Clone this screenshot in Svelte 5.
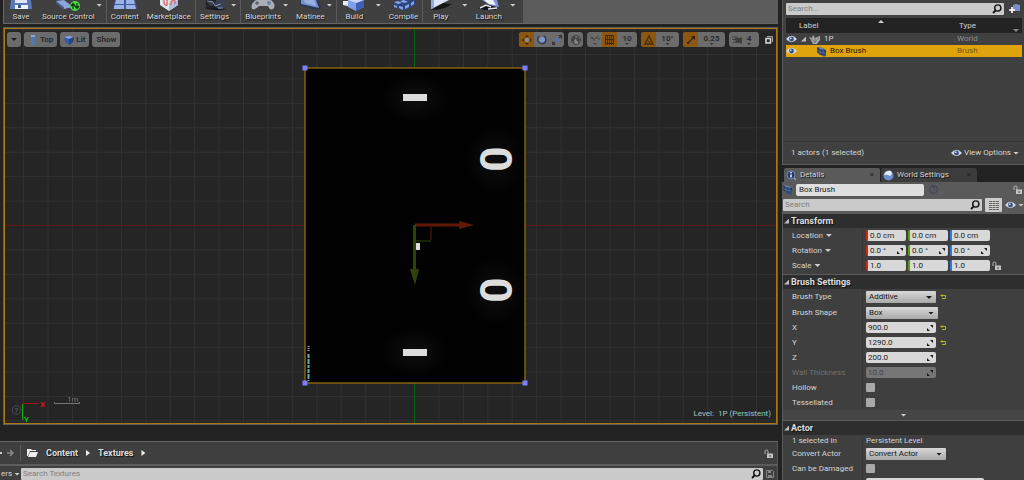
<script>
    let tools = [
        { name: "Save", icon: "save" },
        { name: "Source Control", icon: "source", menu: true, end: true },
        { name: "Content", icon: "content" },
        { name: "Marketplace", icon: "market", end: true },
        { name: "Settings", icon: "gears", menu: true, end: true },
        { name: "Blueprints", icon: "pad", menu: true },
        { name: "Matinee", icon: "matinee", menu: true, end: true },
        { name: "Build", icon: "cube", menu: true, loose: true },
        { name: "Compile", icon: "compile", end: true },
        { name: "Play", icon: "play", menu: true, loose: true },
        { name: "Launch", icon: "launch", menu: true, loose: true },
    ];

    let transform = $state([
        { name: "Location", values: ["0.0 cm", "0.0 cm", "0.0 cm"] },
        { name: "Rotation", values: ["0.0 °", "0.0 °", "0.0 °"], spin: true },
        { name: "Scale", values: ["1.0", "1.0", "1.0"], lock: true },
    ]);

    let numbers = $state([
        { id: "size-x", name: "X", value: "900.0", reset: true },
        { id: "size-y", name: "Y", value: "1290.0", reset: true },
        { id: "size-z", name: "Z", value: "200.0" },
        { id: "wall", name: "Wall Thickness", value: "10.0", disabled: true },
    ]);

    let axes = ["x", "y", "z"];
    let steps = Array.from({ length: 33 }, (_, i) => i - 16);
    let corners = [[305, 68], [525, 68], [305, 383], [525, 383]];
</script>

{#snippet toolIcon(kind)}
    <svg class="tool-icon" viewBox="0 0 26 11" aria-hidden="true">
        {#if kind === "save"}
            <path d="M3 0h20l1 9H2z" fill="#5878b8" />
            <path d="M7 0h12v3H7z" fill="#dfe6f5" />
            <path d="M7 5h13v4H7z" fill="#eef2fa" />
            <path d="M10 5h3v3h-3z" fill="#3c5690" />
        {:else if kind === "source"}
            <path d="M1 1 9 0l9 7-9 2z" fill="#8da4d8" />
            <path d="m1 1 8 6v3L1 3z" fill="#4a5f96" />
            <circle cx="20" cy="6" r="5" fill="#4fd94b" />
            <path d="M18 9V4m-2 2 2-2.400L20 6M22 3v5m-2-2 2 2.400L24 6" fill="none" stroke="#10380f" stroke-width="1.300" />
        {:else if kind === "content"}
            <path d="M3 0h20l2 9H1z" fill="#3c5a9c" />
            <path d="M4 0h8v4H3zM14 0h8l1 4h-9zM2.500 5H12v4H2zM14 5h9l1 4H14z" fill="#9bb2e6" />
        {:else if kind === "market"}
            <path d="M4 0h18v5l-9 6-9-6z" fill="#dfe4ef" />
            <path d="m13 3 9-3v5l-9 6z" fill="#aebcdd" />
            <path d="M8 0v3q1 3 3 2V0m4 5V2q2-3 4-1v3" fill="none" stroke="#d3706c" stroke-width="1.400" />
        {:else if kind === "gears"}
            <path d="M2 8q10-3 22 1-10 3-22-1z" fill="#17191d" />
            <circle cx="9" cy="3" r="4" fill="none" stroke="#20242c" stroke-width="3" />
            <circle cx="18" cy="4" r="3.500" fill="none" stroke="#384356" stroke-width="3" />
            <path d="m5 1 6 1 2 4 6-2M16 8h5" stroke="#8195bd" fill="none" />
        {:else if kind === "pad"}
            <path d="M2 9Q0 4 6 0h15q6 5 2 9-3 2-5-3h-9Q6 10 2 9z" fill="#a9adb5" />
            <path d="M7 1v4M5 3h4" stroke="#4b4e56" />
            <circle cx="19" cy="3" r="2" fill="#6d7faa" />
        {:else if kind === "matinee"}
            <path d="M3 0h19l2 8-5 2L2 5z" fill="#293752" />
            <path d="m4 0 15 0 3 8L4 4z" fill="#7390cd" />
            <path d="m7 0 10 0 2 6L8 3z" fill="#99afdf" />
        {:else if kind === "cube"}
            <path d="M2 1h9v6L2 5z" fill="#e7eaf2" />
            <path d="M7 0h16v7l-8 4-8-4z" fill="#7f9fe8" />
            <path d="m15 3 8-3v7l-8 4z" fill="#3f61b5" />
            <path d="m7 0 8 3 8-3z" fill="#c7d5f8" />
        {:else if kind === "compile"}
            <path d="m2 3 9-3 13 0v5l-11 6-11-5z" fill="#2c457f" />
            <path d="m3 2 4-1 4 2-4 1zM9 1l4-1 4 2-4 1zM3 5l3 1v2L3 7zM8 6l4 1v3L8 8zM14 6l4-2v3l-4 2zM20 3l3-2v3l-3 2z" fill="#86a5ec" />
        {:else if kind === "play"}
            <path d="M3 10 15 3q5 1 9 1-8 6-21 6z" fill="#151515" />
            <path d="M3 0h18L3 9z" fill="#dce4f7" />
            <path d="M3 0h3v8L3 9z" fill="#90a8db" />
        {:else}
            <path d="M6 0h15l2 7-8-1z" fill="#7895d5" />
            <path d="M8 0h9l3 5-7-1z" fill="#eff3fc" />
            <path d="m2 8 8-4 10 3v3H8z" fill="#14171c" />
            <path d="m4 8 6-3 5 2M12 9l9-1" stroke="#e1e5ed" fill="none" stroke-width="1.500" />
        {/if}
    </svg>
{/snippet}

{#snippet eye()}
    <svg class="eye" viewBox="0 0 12 8" aria-hidden="true">
        <path d="M0 4q6-7 12 0-6 7-12 0z" fill="#cfd8e8" />
        <circle cx="6" cy="4" r="2.600" fill="#33507f" />
        <circle cx="5.300" cy="3.200" r=".9" fill="#fff" />
    </svg>
{/snippet}

{#snippet lens()}
    <svg class="lens" viewBox="0 0 10 10" aria-hidden="true">
        <circle cx="5.800" cy="4" r="3.100" fill="none" stroke="#111" stroke-width="1.400" />
        <path d="M3.700 6.300 1 9" stroke="#111" stroke-width="1.800" />
    </svg>
{/snippet}

{#snippet lock()}
    <svg class="lock" viewBox="0 0 9 9" aria-hidden="true">
        <path d="M1 5V2.500Q1 1 2.500 1T4 2.500V5" fill="none" stroke="#b9b9b9" />
        <path d="M3 4.500h6V9H3z" fill="#c4c4c4" />
        <path d="M5.500 6h1v2h-1z" fill="#444" />
    </svg>
{/snippet}

{#snippet brush()}
    <svg class="brush" viewBox="0 0 11 11" aria-hidden="true">
        <path d="m1 1 6 1 3 2v6l-6-1-3-3z" fill="#263c62" />
        <path d="m1 1 6 1 3 2-6-1z" fill="#7288b1" />
        <path d="M4 3v6M1 4l3 2 6 1M7 3v7" stroke="#7187b3" fill="none" stroke-width=".6" />
        <circle cx="8" cy="8.500" r="2" fill="#334f80" />
    </svg>
{/snippet}

{#snippet spin()}
    <svg class="spin" viewBox="0 0 6 6" aria-hidden="true">
        <path d="M3 0h3v3zM0 3v3h3z" fill="#1a1a1a" />
    </svg>
{/snippet}

{#snippet undo(name)}
    <button class="undo" aria-label="Reset {name}">
        <svg viewBox="0 0 7 6" aria-hidden="true">
            <path d="M2 1.500h3.500v3H2" fill="none" stroke="#b9b41e" />
            <path d="M2.500 0v3L0 1.500z" fill="#b9b41e" />
        </svg>
    </button>
{/snippet}

<div class="editor">
    <main>
        <nav class="toolbar">
            <div class="tools">
                {#each tools as tool}
                    <button class="tool" class:with-menu={tool.menu}>
                        {@render toolIcon(tool.icon)}
                        {tool.name}
                    </button>
                    {#if tool.menu}
                        <button class="tool-menu" class:loose={tool.loose} aria-label="{tool.name} options"><i class="down"></i></button>
                    {/if}
                    {#if tool.end}
                        <i class="rule"></i>
                    {/if}
                {/each}
            </div>
        </nav>

        <section class="viewport">
            <svg class="scene" viewBox="5 29 771 394" preserveAspectRatio="xMidYMid slice">
                <defs>
                    <radialGradient id="glow">
                        <stop offset="0" stop-color="#fff" stop-opacity=".05" />
                        <stop offset="1" stop-color="#fff" stop-opacity="0" />
                    </radialGradient>
                </defs>
                {#each steps as n}
                    <path class="grid" d="M{414.5 + n * 24.43} 0V480" />
                    <path class="grid" d="M0 {225.5 + n * 24.43}H1024" />
                {/each}
                <path d="M5 225.500H776" stroke="#5c1a17" />
                <path d="M414.500 29V423" stroke="#0b6010" />
                <rect x="305" y="68" width="220" height="315" fill="#020202" stroke="#84600f" stroke-width="1.500" />
                <g fill="url(#glow)">
                    <ellipse cx="415" cy="98" rx="34" ry="24" />
                    <ellipse cx="415" cy="352" rx="34" ry="24" />
                    <ellipse cx="495" cy="160" rx="29" ry="34" />
                    <ellipse cx="495" cy="291" rx="29" ry="34" />
                </g>
                <g fill="#dcdcdc">
                    <rect x="403" y="94" width="24" height="7" />
                    <rect x="403" y="349" width="24" height="7" />
                    <rect x="416" y="243" width="4" height="7" />
                    <text class="digit" transform="translate(480 159) rotate(90)">0</text>
                    <text class="digit" transform="translate(480 290) rotate(90)">0</text>
                </g>
                <g stroke="#65b3ad" fill="none" stroke-width="2">
                    <path d="M308.500 346v6" stroke="#aaa" stroke-dasharray="1 1" />
                    <path d="M308.500 354v27" stroke-dasharray="4 1 5 1 3 1" />
                </g>
                <g stroke="#621807" fill="none" stroke-width="3">
                    <path d="M415 225H461" />
                    <path d="M431 227v13" stroke-width="1" />
                    <path d="m459 221 15 4-15 4z" fill="#621807" stroke="none" />
                </g>
                <g stroke="#2f4308" fill="none" stroke-width="3">
                    <path d="M414.500 225V272" />
                    <path d="M416 241h15" stroke-width="1" />
                    <path d="m410 269 5 16 4-16z" fill="#2f4308" stroke="none" />
                </g>
                {#each corners as [x, y]}
                    <rect x={x - 2.5} y={y - 2.5} width="5" height="5" fill="#7d7dff" />
                {/each}
                <path d="M22.500 403.500H39" stroke="#a31414" />
                <path d="M22.500 404V420" stroke="#0eae12" />
                <text class="axis" x="40" y="407" fill="#d01616">X</text>
                <text class="axis" x="24" y="422" fill="#15bd18">Y</text>
                <circle cx="16.500" cy="410" r="4.300" fill="none" stroke="#454b57" />
                <text class="small" x="14.500" y="413" fill="#5d6677">?</text>
                <path d="M54.500 402v1.500H79.500V402" fill="none" stroke="#777" />
                <text class="small" x="67" y="402" fill="#777">1m</text>
            </svg>

            <div class="view-tools">
                <button class="chip" aria-label="Viewport options"><i class="down dark"></i></button>
                <button class="chip">
                    <svg class="mini" viewBox="0 0 10 10" aria-hidden="true"><path d="M3 0h4v10H3z" fill="#4e78ae" /><path d="M3 0h4v2H3z" fill="#82a6d0" /></svg>
                    Top
                </button>
                <button class="chip">
                    <svg class="mini" viewBox="0 0 10 10" aria-hidden="true"><path d="m0 2 5-1 5 1-1 5-4 3-4-3z" fill="#3b5aa6" /><path d="m0 2 5-1 5 1-5 2z" fill="#8ea6d9" /><path d="M5 4v6l4-3 1-5z" fill="#274488" /></svg>
                    Lit
                </button>
                <button class="chip">Show</button>

                <div class="group first">
                    <button class="on" aria-label="Move">
                        <svg class="mini" viewBox="0 0 10 10" aria-hidden="true"><path d="m5 0 2 2H3zM5 10 3 8h4zM0 5l2-2v4zM10 5 8 7V3z" fill="#3d2b12" /><circle cx="5" cy="5" r="2" fill="#8b91a4" /></svg>
                    </button>
                    <button aria-label="Rotate">
                        <svg class="mini" viewBox="0 0 10 10" aria-hidden="true"><circle cx="5" cy="5" r="3" fill="#7f97c6" /><path d="M2 1q-3 5 1 7 5 2 6-3 0-3-2-4" fill="none" stroke="#2f3c5a" stroke-width="1.400" /></svg>
                    </button>
                    <button aria-label="Scale">
                        <svg class="mini" viewBox="0 0 10 10" aria-hidden="true"><path d="M6 0h4v4zM0 6v4h4z" fill="#333" /><path d="m2 8 6-6" stroke="#333" /><circle cx="5" cy="5" r="2.500" fill="#5872a7" /></svg>
                    </button>
                </div>
                <div class="group">
                    <button aria-label="World space">
                        <svg class="mini" viewBox="0 0 10 10" aria-hidden="true"><circle cx="5" cy="5" r="4.500" fill="#858585" stroke="#3c3c3c" /><path d="m1 2 3-1 1 2-2 3 1 3-3-3zM6 1l3 3-1 4-2-2-1-2z" fill="#424242" /></svg>
                    </button>
                </div>
                <div class="group">
                    <button aria-label="Surface snapping">
                        <svg class="mini" viewBox="0 0 10 10" aria-hidden="true"><path d="m0 3 4 1 5-3M4 4v2M6 3l4 1M1 1l2 2" fill="none" stroke="#464646" /><path d="M3 8h4L5 10z" fill="#444" /></svg>
                    </button>
                    <button class="on" aria-label="Grid snapping">
                        <svg class="mini" viewBox="0 0 10 10" aria-hidden="true"><path d="M.5 0v10M2.500 0v10M4.500 0v10M6.500 0v10M8.500 0v10M0 .5h9M0 4.500h9M0 8.500h9" stroke="#412b0c" /></svg>
                    </button>
                    <button class="value">10<i class="down dot"></i></button>
                </div>
                <div class="group">
                    <button class="on" aria-label="Angle snapping">
                        <svg class="mini" viewBox="0 0 10 10" aria-hidden="true"><path d="M5 1 1 9h8z" fill="none" stroke="#412b0c" stroke-width="1.300" /><path d="M4 6q2 0 2 3" stroke="#412b0c" fill="none" /></svg>
                    </button>
                    <button class="value angle">10°<i class="down dot"></i></button>
                </div>
                <div class="group">
                    <button class="on" aria-label="Scale snapping">
                        <svg class="mini" viewBox="0 0 10 10" aria-hidden="true"><path d="M5 1h4v4zM1 7h2v2H1z" fill="#33230e" /><path d="m2 8 6-6" stroke="#33230e" stroke-width="1.300" /></svg>
                    </button>
                    <button class="value wide">0.25<i class="down dot"></i></button>
                </div>
                <div class="group">
                    <button class="camera">
                        <svg class="mini" viewBox="0 0 10 10" aria-hidden="true"><path d="M3 3h5l2-1v7L8 8H4z" fill="#3e3e3e" /><path d="M0 2h6M0 4.500h4M1 7h4" stroke="#3e3e3e" /></svg>
                        <span class="value">4<i class="down dot"></i></span>
                    </button>
                </div>
                <button class="restore" aria-label="Restore viewport">
                    <svg viewBox="0 0 8 8" aria-hidden="true"><path d="M2 .5h5.500V6" fill="none" stroke="#a9a9a9" /><path d="M1 2.500h4.500V7H1z" fill="none" stroke="#ddd" stroke-width="1.500" /></svg>
                </button>
            </div>
            <p class="level">Level: <b>1P (Persistent)</b></p>
        </section>

        <section class="browser">
            <nav class="crumbs">
                <svg class="nav-arrows" viewBox="0 0 14 8" aria-hidden="true"><path d="M0 4h2" stroke="#ccc" stroke-width="2" /><path d="M7 4h6M10 1l3 3-3 3" fill="none" stroke="#8a8a8a" stroke-width="1.500" /></svg>
                <i class="rule"></i>
                <svg class="folder" viewBox="0 0 11 8" aria-hidden="true"><path d="M0 7V0h4l1 1h4v1H3L1 7z" fill="#eee" /><path d="M3 3h8L9 8H1z" fill="#eee" /></svg>
                <a href="#content">Content</a>
                <i class="next"></i>
                <a href="#textures">Textures</a>
                <i class="next"></i>
                <button class="plain push" aria-label="Lock browser">{@render lock()}</button>
            </nav>
            <div class="filter-row">
                <button class="plain filters">ers <i class="down"></i></button>
                <div class="search">
                    <input type="text" placeholder="Search Textures" aria-label="Search Textures" />
                    {@render lens()}
                </div>
                <button class="plain disk" aria-label="Save search">
                    <svg viewBox="0 0 8 8" aria-hidden="true"><path d="M.5.5h6l1 1v6h-7z" fill="none" stroke="#858585" /><path d="M2 1h3v2H2zM2 5h4v2H2z" fill="#858585" /></svg>
                </button>
            </div>
        </section>
    </main>

    <aside>
        <section class="outliner">
            <div class="search-row">
                <div class="search">
                    <input type="text" placeholder="Search..." aria-label="Search actors" />
                    {@render lens()}
                </div>
                <button class="plain" aria-label="New folder">
                    <svg class="add" viewBox="0 0 11 10" aria-hidden="true"><path d="m4 1 3-1 4 1v6H4z" fill="#7590c6" /><path d="M3 3v6M0 6h6" stroke="#fff" stroke-width="1.700" /></svg>
                </button>
            </div>
            <table>
                <thead>
                    <tr>
                        <th class="see"></th>
                        <th class="label">Label <i class="up"></i></th>
                        <th class="type">Type <i class="down small-down"></i></th>
                    </tr>
                </thead>
                <tbody>
                    <tr>
                        <td class="see">{@render eye()}</td>
                        <td>
                            <div class="cell">
                                <i class="fold"></i>
                                <svg class="world" viewBox="0 0 12 9" aria-hidden="true"><path d="m0 2 3 1 1-3 2 3 5-2v4L8 9H4z" fill="#a6a6a6" /><path d="m2 4 4 3 4-4M6 3v5" fill="none" stroke="#777" /></svg>
                                1P
                            </div>
                        </td>
                        <td class="kind">World</td>
                    </tr>
                    <tr class="selected">
                        <td class="see">{@render eye()}</td>
                        <td><div class="cell deep">{@render brush()} Box Brush</div></td>
                        <td class="kind">Brush</td>
                    </tr>
                </tbody>
            </table>
            <footer>
                <span>1 actors (1 selected)</span>
                <button class="plain options">{@render eye()} View Options<i class="down"></i></button>
            </footer>
        </section>

        <div class="tabs">
            <button class="tab active">
                <svg class="tab-icon" viewBox="0 0 11 11" aria-hidden="true"><circle cx="5" cy="5" r="4" fill="#253a66" stroke="#7089b8" /><path d="M5 2v1.500M5 4.500v3" stroke="#fff" stroke-width="1.400" /><path d="m8 8 2 2" stroke="#8ba0c8" stroke-width="1.500" /></svg>
                Details <span class="close">×</span>
            </button>
            <button class="tab">
                <svg class="tab-icon" viewBox="0 0 11 11" aria-hidden="true"><circle cx="5.500" cy="5.500" r="5" fill="#6c8fd0" /><path d="M1 5q2-5 7-4 2 3-1 5-3-2-6-1z" fill="#e3ebf8" /></svg>
                World Settings <span class="close">×</span>
            </button>
        </div>

        <section class="details">
            <div class="name-row">
                {@render brush()}
                <input class="name" type="text" value="Box Brush" aria-label="Actor name" />
                <button class="help" aria-label="Help">?</button>
                <button class="plain push" aria-label="Lock details">{@render lock()}</button>
            </div>
            <div class="search-row inner">
                <div class="search">
                    <input type="text" placeholder="Search" aria-label="Search details" />
                    {@render lens()}
                </div>
                <button class="matrix" aria-label="Property matrix">
                    <svg viewBox="0 0 10 9" aria-hidden="true"><path d="M0 .5h10M0 2.500h10M0 4.500h10M0 6.500h10M0 8.500h10" stroke="#666" stroke-dasharray="3 .5" /></svg>
                </button>
                <button class="plain options" aria-label="View options">{@render eye()}<i class="down"></i></button>
            </div>

            <div class="body">
                <h2><i class="fold"></i>Transform</h2>
                {#each transform as row}
                    <div class="row">
                        <span class="prop">{row.name} <i class="down"></i></span>
                        <div class="val">
                            {#each axes as axis, i}
                                <div class="num {axis}">
                                    <input type="text" aria-label="{row.name} {axis}" bind:value={row.values[i]} />
                                    {#if row.spin}{@render spin()}{/if}
                                </div>
                            {/each}
                            {#if row.lock}{@render lock()}{/if}
                        </div>
                    </div>
                {/each}
                <div class="gap"></div>

                <h2><i class="fold"></i>Brush Settings</h2>
                <div class="row tall">
                    <label class="prop" for="brush-type">Brush Type</label>
                    <div class="val">
                        <div class="pick"><select id="brush-type"><option>Additive</option><option>Subtractive</option></select><i class="down dark"></i></div>
                        {@render undo("Brush Type")}
                    </div>
                </div>
                <div class="row">
                    <label class="prop" for="brush-shape">Brush Shape</label>
                    <div class="val">
                        <div class="pick mid"><select id="brush-shape"><option>Box</option><option>Cone</option></select><i class="down dark"></i></div>
                    </div>
                </div>
                {#each numbers as item}
                    <div class="row" class:disabled={item.disabled}>
                        <label class="prop" for={item.id}>{item.name}</label>
                        <div class="val">
                            <div class="num long">
                                <input id={item.id} type="text" bind:value={item.value} disabled={item.disabled} />
                                {@render spin()}
                            </div>
                            {#if item.reset}{@render undo(item.name)}{/if}
                        </div>
                    </div>
                {/each}
                <div class="row">
                    <label class="prop" for="hollow">Hollow</label>
                    <div class="val"><input id="hollow" type="checkbox" /></div>
                </div>
                <div class="row">
                    <label class="prop" for="tessellated">Tessellated</label>
                    <div class="val"><input id="tessellated" type="checkbox" /></div>
                </div>
                <button class="more" aria-label="Show advanced"><i class="down"></i></button>

                <h2><i class="fold"></i>Actor</h2>
                <div class="row short">
                    <span class="prop">1 selected in</span>
                    <div class="val">Persistent Level</div>
                </div>
                <div class="row">
                    <label class="prop" for="convert">Convert Actor</label>
                    <div class="val">
                        <div class="pick large"><select id="convert"><option>Convert Actor</option></select><i class="down dark"></i></div>
                    </div>
                </div>
                <div class="row">
                    <label class="prop" for="damaged">Can be Damaged</label>
                    <div class="val"><input id="damaged" type="checkbox" /></div>
                </div>
                <div class="row">
                    <span class="prop"></span>
                    <div class="val"><div class="num life"><input type="text" aria-label="Initial life span" /></div></div>
                </div>
            </div>
        </section>
    </aside>
</div>

<style>
    :global(body) {
        background: #222;
        overflow: hidden;
    }
    .editor {
        display: grid;
        grid-template-columns: minmax(0, 1fr) 242px;
        grid-template-rows: minmax(0, 1fr);
        gap: 4px;
        height: 100vh;
        color: #d4d4d4;
        font: 8px/12px Roboto, sans-serif;
        overflow: hidden;
    }
    .editor * {
        box-sizing: border-box;
    }
    button,
    input,
    select {
        font: inherit;
        color: inherit;
        margin: 0;
        padding: 0;
        border: 0;
        background: none;
    }
    button {
        display: flex;
        align-items: center;
        justify-content: center;
    }
    svg {
        flex: none;
        display: block;
    }
    i {
        flex: none;
        display: block;
    }
    main {
        display: flex;
        flex-direction: column;
        min-width: 0;
        min-height: 0;
    }
    .down {
        width: 6px;
        height: 3px;
        background: #cfcfcf;
        clip-path: polygon(0 0, 100% 0, 50% 100%);
    }
    .down.dark {
        background: #1c1c1c;
    }
    .down.dot {
        width: 4px;
        height: 2px;
        background: #333;
    }
    .up {
        width: 6px;
        height: 3px;
        background: #cfcfcf;
        clip-path: polygon(50% 0, 100% 100%, 0 100%);
    }
    .fold {
        width: 5px;
        height: 5px;
        background: #bbb;
        clip-path: polygon(100% 0, 100% 100%, 0 100%);
    }
    .rule {
        width: 1px;
        background: #5a5a5a;
    }
    .plain {
        flex: none;
    }
    .push {
        margin-left: auto;
    }

    .toolbar {
        flex: none;
        height: 24px;
        margin: 0 0 3px 3px;
        background: #5c5c5c;
        border-left: 1px solid #666;
        border-bottom: 1px solid #666;
    }
    .tools {
        display: flex;
        width: fit-content;
        height: 100%;
        padding-right: 4px;
        background: #404040;
    }
    .tool {
        flex-direction: column;
        justify-content: flex-start;
        min-width: 32px;
        padding: 0 4px;
        color: #d8d8d8;
        font-size: 8px;
        line-height: 11px;
        text-shadow: 1px 1px 1px #111;
        white-space: nowrap;
    }
    .tool.with-menu {
        padding-right: 1px;
    }
    .tool-icon {
        width: 26px;
        height: 11px;
    }
    .tool-menu {
        width: 7px;
        height: 10px;
        margin-right: 3px;
    }
    .tool-menu.loose {
        margin-left: 6px;
    }

    .viewport {
        position: relative;
        flex: 1;
        min-height: 0;
        border: 1px solid #5e5e5e;
        margin-left: 3px;
        background: #252525;
    }
    .viewport::after {
        content: "";
        position: absolute;
        inset: 0;
        border: 1px solid #a8780f;
        pointer-events: none;
    }
    .scene {
        position: absolute;
        inset: 1px;
        width: calc(100% - 2px);
        height: calc(100% - 2px);
    }
    .grid {
        stroke: #323232;
    }
    .digit {
        font: 700 44px Roboto, sans-serif;
        text-anchor: middle;
    }
    .axis {
        font: 700 8px Roboto, sans-serif;
    }
    .small {
        font: 8px Roboto, sans-serif;
    }
    .view-tools {
        position: relative;
        display: flex;
        align-items: center;
        gap: 4px;
        padding: 4px 4px 0 3px;
    }
    .chip,
    .group {
        flex: none;
        height: 15px;
        border-radius: 3px;
        background: #6c6c6c;
        color: #2b2b2b;
        font-weight: 700;
    }
    .chip {
        gap: 2px;
        padding: 0 4px;
    }
    .chip + .chip {
        margin-left: -1px;
    }
    .group {
        display: flex;
        overflow: hidden;
    }
    .first {
        margin-left: auto;
    }
    .group button {
        width: 15px;
        height: 15px;
    }
    .value {
        display: flex;
        flex-direction: column;
        align-items: center;
        line-height: 9px;
    }
    .group .value {
        width: 20px;
    }
    .group .angle {
        width: 23px;
    }
    .group .wide {
        width: 27px;
    }
    .group .camera {
        width: 30px;
    }
    .camera .value {
        width: 14px;
    }
    .group .on {
        background: #8c5711;
    }
    .mini {
        width: 10px;
        height: 10px;
    }
    .restore {
        margin-left: 2px;
    }
    .restore svg {
        width: 8px;
        height: 8px;
    }
    .level {
        position: absolute;
        right: 6px;
        bottom: 4px;
        margin: 0;
        color: #bbb;
    }
    .level b {
        margin-left: 2px;
        color: #8ccbc8;
        font-weight: 400;
    }

    .browser {
        flex: none;
        height: 39px;
        margin-top: 16px;
        border-top: 1px solid #666;
        border-right: 1px solid #555;
        background: #3f3f3f;
        overflow: hidden;
    }
    .crumbs {
        display: flex;
        align-items: center;
        height: 24px;
        padding-right: 4px;
        border-bottom: 2px solid #5c5c5c;
        gap: 8px;
        font-weight: 700;
        font-size: 9px;
    }
    .crumbs a {
        color: #ddd;
        text-decoration: none;
        text-shadow: 1px 1px 1px #111;
    }
    .crumbs .rule {
        height: 16px;
        margin: 0 -2px;
    }
    .nav-arrows {
        width: 14px;
        height: 8px;
    }
    .folder {
        width: 11px;
        height: 8px;
    }
    .next {
        width: 4px;
        height: 6px;
        background: #eee;
        clip-path: polygon(0 0, 100% 50%, 0 100%);
    }
    .filter-row {
        display: flex;
        align-items: center;
        padding-top: 2px;
    }
    .filters {
        gap: 2px;
        width: 21px;
    }
    .disk {
        width: 14px;
    }
    .disk svg {
        width: 8px;
        height: 8px;
    }

    .search {
        display: flex;
        align-items: center;
        flex: 1;
        min-width: 0;
        height: 12px;
        padding: 0 2px;
        border-radius: 1px;
        background: #cacaca;
    }
    .search input {
        flex: 1;
        min-width: 0;
        height: 12px;
        color: #222;
        outline: none;
    }
    .search input::placeholder {
        color: #808080;
    }
    .lens {
        width: 10px;
        height: 10px;
    }
    .lock {
        width: 9px;
        height: 9px;
    }
    .brush {
        width: 11px;
        height: 11px;
    }
    .eye {
        width: 11px;
        height: 8px;
    }
    .spin {
        width: 6px;
        height: 6px;
    }

    aside {
        display: flex;
        flex-direction: column;
        min-width: 0;
        min-height: 0;
    }
    .outliner {
        display: flex;
        flex-direction: column;
        flex: none;
        height: 165px;
        border: solid #5a5a5a;
        border-width: 0 0 1px 1px;
        background: #404040;
    }
    .search-row {
        display: flex;
        align-items: center;
        gap: 5px;
        padding: 3px 4px 3px 3px;
    }
    .add {
        width: 11px;
        height: 10px;
    }
    table {
        width: calc(100% - 5px);
        margin-left: 3px;
        border-collapse: collapse;
        table-layout: fixed;
    }
    th,
    td {
        padding: 0;
        height: 12px;
        text-align: left;
        font-weight: 400;
    }
    th {
        position: relative;
        height: 15px;
        background: #232323;
        color: #d0d0d0;
    }
    th.see {
        width: 13px;
    }
    th.type {
        width: 65px;
        padding-left: 2px;
    }
    th .up {
        position: absolute;
        top: 2px;
        left: 50%;
    }
    th .small-down {
        position: absolute;
        right: 3px;
        bottom: 1px;
        background: #888;
    }
    .cell {
        display: flex;
        align-items: center;
        gap: 3px;
        padding-left: 2px;
    }
    .deep {
        padding-left: 17px;
    }
    .world {
        width: 12px;
        height: 9px;
    }
    .kind {
        color: #8f8f8f;
    }
    .selected {
        background: #dfa30b;
        color: #1d1804;
    }
    .selected .kind {
        color: #745b19;
    }
    footer {
        display: flex;
        align-items: center;
        justify-content: space-between;
        height: 23px;
        margin-top: auto;
        padding: 0 5px 0 8px;
        border-top: 1px solid #363636;
    }
    .options {
        gap: 2px;
    }

    .tabs {
        display: flex;
        flex: none;
        gap: 1px;
        margin-top: 3px;
        padding-left: 2px;
    }
    .tab {
        width: 96px;
        height: 14px;
        gap: 3px;
        padding: 0 6px 0 2px;
        border-radius: 2px 2px 0 0;
        background: #3c3c3c;
        text-shadow: 1px 1px 1px #111;
    }
    .tab.active {
        background: #5a5a5a;
    }
    .tab-icon {
        width: 11px;
        height: 11px;
    }
    .close {
        margin-left: auto;
        color: #222;
        text-shadow: none;
    }

    .details {
        flex: 1;
        min-height: 0;
        background: #5a5a5a;
        overflow: hidden;
    }
    .name-row {
        display: flex;
        align-items: center;
        gap: 3px;
        height: 15px;
        padding: 0 2px 0 0;
    }
    .name {
        width: 128px;
        height: 12px;
        padding: 0 3px;
        border-radius: 2px;
        background: #dedede;
        color: #222;
    }
    .help {
        width: 9px;
        height: 9px;
        margin-left: 2px;
        border: 1px solid #3a4557;
        border-radius: 50%;
        color: #2b3547;
        font-size: 7px;
        line-height: 7px;
    }
    .inner {
        gap: 3px;
        padding: 1px 0 2px 1px;
    }
    .matrix {
        width: 17px;
        height: 14px;
        border-radius: 1px;
        background: #ccc;
    }
    .matrix svg {
        width: 10px;
        height: 9px;
    }
    .body {
        margin-left: 1px;
        background: #3f3f3f;
    }
    h2 {
        display: flex;
        align-items: center;
        gap: 2px;
        height: 14px;
        margin: 0;
        padding-left: 1px;
        background: #2e2e2e;
        color: #ddd;
        font-size: 9px;
        line-height: 14px;
        text-shadow: 1px 1px 1px #111;
    }
    .row {
        display: grid;
        grid-template-columns: 80px minmax(0, 1fr);
        align-items: center;
        height: 15px;
    }
    .row.tall {
        height: 16px;
    }
    .row.short {
        height: 11px;
    }
    .prop {
        display: flex;
        align-items: center;
        gap: 3px;
        height: 100%;
        padding-left: 9px;
        border-right: 1px solid #383838;
    }
    .val {
        display: flex;
        align-items: center;
        gap: 2px;
        padding-left: 3px;
    }
    .disabled {
        color: #707070;
    }
    .num {
        display: flex;
        align-items: center;
        width: 40px;
        height: 11px;
        padding: 0 3px 0 2px;
        border-radius: 2px;
        background: #d8d8d8;
        color: #222;
    }
    .num input {
        flex: 1;
        min-width: 0;
        width: 100%;
        height: 11px;
    }
    .num.x {
        border-left: 2px solid #cf2a10;
    }
    .num.y {
        border-left: 2px solid #5a9e0c;
    }
    .num.z {
        border-left: 2px solid #2b7bea;
    }
    .num.long {
        width: 70px;
    }
    .disabled .num {
        background: #767676;
        color: #444;
    }
    .num.life {
        width: 118px;
    }
    .pick {
        position: relative;
        width: 70px;
    }
    .pick.mid {
        width: 72px;
    }
    .pick.large {
        width: 80px;
    }
    .pick select {
        display: block;
        width: 100%;
        height: 12px;
        padding: 0 3px;
        border-radius: 1px;
        background: linear-gradient(#d8d8d8, #a9a9a9);
        color: #161616;
        appearance: none;
    }
    .pick .down {
        position: absolute;
        right: 4px;
        top: 5px;
        pointer-events: none;
    }
    .undo {
        width: 11px;
    }
    .undo svg {
        width: 7px;
        height: 6px;
    }
    input[type="checkbox"] {
        width: 9px;
        height: 9px;
        border-radius: 1px;
        background: #a9a9a9;
        appearance: none;
    }
    .gap {
        height: 2px;
        border-bottom: 1px solid #5a5a5a;
    }
    .more {
        width: 100%;
        height: 11px;
        border-bottom: 1px solid #5a5a5a;
        background: #464646;
    }
</style>
